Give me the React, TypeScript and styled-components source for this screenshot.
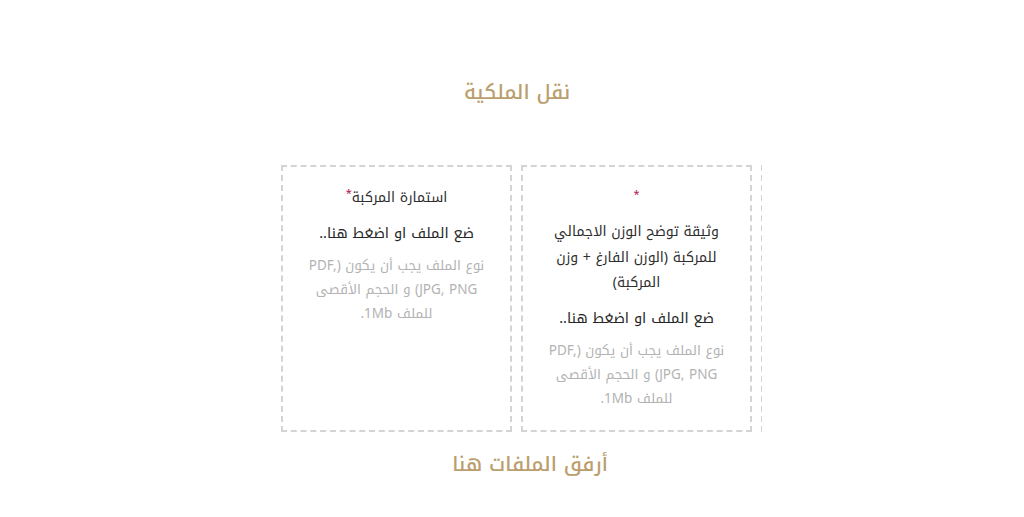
import React from "react";
import styled, { createGlobalStyle } from "styled-components";

const Global = createGlobalStyle`
  html, body { margin: 0; padding: 0; background: #ffffff; }
  body { font-family: "Noto Kufi Arabic", "DejaVu Sans", sans-serif; }
`;

const Page = styled.div`
  width: 1024px;
  min-height: 517px;
  display: flex;
  flex-direction: column;
  align-items: center;
  padding-top: 76px;
  padding-left: 10px;
  box-sizing: border-box;
`;

const Title = styled.h2<{ $shift?: number; $top?: number }>`
  margin: ${(p) => p.$top ?? 0}px 0 0;
  font-family: "Noto Kufi Arabic", "DejaVu Sans", sans-serif;
  font-weight: 500;
  font-size: 20px;
  line-height: 32px;
  color: #bb9e6e;
  direction: rtl;
  text-align: center;
  padding-left: ${(p) => (p.$shift ? p.$shift * 2 : 0)}px;
`;

const Viewport = styled.div`
  width: 481px;
  margin-top: 57px;
  margin-left: 9px;
  overflow: hidden;
`;

const Track = styled.div`
  display: flex;
  gap: 9px;
`;

const Card = styled.div`
  flex: 0 0 231px;
  width: 231px;
  height: 267px;
  box-sizing: border-box;
  border: 2px dashed #d4d4d4;
  padding: 18px 16px 0;
  direction: rtl;
  text-align: center;
  display: flex;
  flex-direction: column;
  align-items: center;
`;

const Label = styled.div`
  font-size: 14px;
  line-height: 25.5px;
  color: #2e2e2e;
  margin-bottom: 10px;
`;

const Star = styled.span`
  color: #b3134b;
  font-size: 11px;
  vertical-align: top;
  line-height: 18px;
`;

const StarLine = styled.div`
  color: #b3134b;
  font-size: 11px;
  line-height: 25px;
  height: 25px;
  margin-top: -3px;
  margin-bottom: 12px;
`;

const Drop = styled.div`
  font-size: 14.5px;
  line-height: 25px;
  color: #262626;
  margin-bottom: 8px;
`;

const Hint = styled.div`
  font-size: 13.5px;
  line-height: 24px;
  color: #b3b3b3;
  max-width: 196px;
`;

const hint = "نوع الملف يجب أن يكون (PDF, JPG, PNG) و الحجم الأقصى للملف 1Mb.";

export default function App() {
  return (
    <>
      <Global />
      <Page>
        <Title>نقل الملكية</Title>
        <Viewport>
          <Track>
            <Card>
              <Label>
                استمارة المركبة<Star>*</Star>
              </Label>
              <Drop>ضع الملف او اضغط هنا..</Drop>
              <Hint>{hint}</Hint>
            </Card>
            <Card>
              <StarLine>*</StarLine>
              <Label>وثيقة توضح الوزن الاجمالي للمركبة (الوزن الفارغ + وزن المركبة)</Label>
              <Drop>ضع الملف او اضغط هنا..</Drop>
              <Hint>{hint}</Hint>
            </Card>
            <Card />
          </Track>
        </Viewport>
        <Title $shift={13} $top={16}>أرفق الملفات هنا</Title>
      </Page>
    </>
  );
}
